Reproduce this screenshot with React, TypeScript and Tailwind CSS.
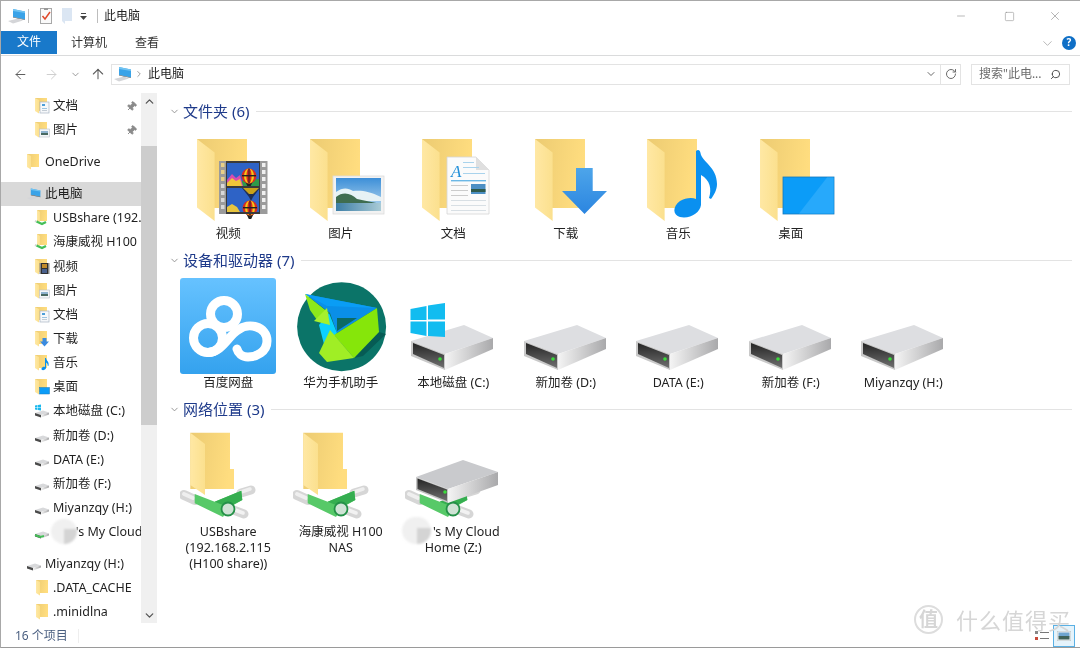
import React from "react";
import { ArrowLeft, ArrowRight, ArrowUp, ChevronDown, ChevronRight, ChevronUp, RotateCw, Search, Minus, Square, X, Pin } from "lucide-react";

const Defs = () => (
  <svg width="0" height="0" className="absolute">
    <defs>
      <linearGradient id="back" x1="0" y1="0" x2="1" y2="0.2"><stop offset="0" stopColor="#eccb72" /><stop offset="1" stopColor="#ffdd7f" /></linearGradient>
      <linearGradient id="flap" x1="0" y1="0" x2="1" y2="0"><stop offset="0" stopColor="#ffe8a4" /><stop offset="1" stopColor="#fbe08e" /></linearGradient>
      <linearGradient id="baidu" x1="0" y1="0" x2="0" y2="1"><stop offset="0" stopColor="#66c2ff" /><stop offset="1" stopColor="#34a2ee" /></linearGradient>
      <linearGradient id="arrow" x1="0" y1="0" x2="0" y2="1"><stop offset="0" stopColor="#4da5ea" /><stop offset="1" stopColor="#2b85e0" /></linearGradient>
      <linearGradient id="side" x1="0" y1="0" x2="1" y2="0"><stop offset="0" stopColor="#f4f4f4" /><stop offset="1" stopColor="#a9a9ab" /></linearGradient>
      <linearGradient id="face" x1="0" y1="0" x2="0" y2="1"><stop offset="0" stopColor="#252525" /><stop offset="1" stopColor="#6f6f6f" /></linearGradient>
      <linearGradient id="sky" x1="0" y1="0" x2="0" y2="1"><stop offset="0" stopColor="#3d8fd8" /><stop offset="1" stopColor="#bcdcf0" /></linearGradient>
      <linearGradient id="water" x1="0" y1="0" x2="1" y2="0"><stop offset="0" stopColor="#3d7ea6" /><stop offset="1" stopColor="#a9cbd6" /></linearGradient>
    </defs>
  </svg>
);

const BigFolder = () => (
  <>
    <polygon points="17,10 67,10 67,79 34,79 17,70" fill="url(#back)" />
    <polygon points="17,10 34.6,23.5 34.6,92 17,78.5" fill="url(#flap)" />
  </>
);

const Balloon = ({ x, y }: { x: number; y: number }) => (
  <g>
    <polygon points={`${x - 4},${y + 5} ${x + 4},${y + 5} ${x + 1.2},${y + 11} ${x - 1.2},${y + 11}`} fill="#222" />
    <circle cx={x} cy={y} r="7.5" fill="#d92a22" />
    <ellipse cx={x} cy={y} rx="5" ry="7.5" fill="#f3c915" />
    <ellipse cx={x} cy={y} rx="2.6" ry="7.5" fill="#d92a22" />
    <rect x={x - 7} y={y - 1} width="14" height="1.4" fill="#222" />
    <rect x={x - 0.5} y={y - 7.5} width="1" height="15" fill="#222" />
  </g>
);

const Video = () => (
  <svg viewBox="0 0 96 96" className="w-24 h-24">
    <BigFolder />
    <rect x="39" y="32" width="48.5" height="53" fill="#9b9b9b" />
    <rect x="46" y="32" width="34" height="53" fill="#3a3a3a" />
    {[34, 41, 48, 55, 62, 69, 76].map((y) => (
      <g key={y}>
        <rect x="41" y={y} width="3.5" height="4" fill={y < 50 ? "#e8cf86" : "#d8d8d8"} />
        <rect x="82" y={y} width="3.5" height="4" fill="#f0f0f0" />
      </g>
    ))}
    <rect x="47" y="34" width="32" height="23" fill="#2e63c6" />
    <polygon points="47,57 47,51 60,52 79,50 79,57" fill="#2e9a4a" />
    <polygon points="47,51 52,45 56,49 60,46 63,57 47,57" fill="#d64db0" />
    <polygon points="47,54 52,49 56,52 60,50 62,57 47,57" fill="#f0c63a" />
    <Balloon x={69} y={47} />
    <rect x="47" y="59" width="32" height="24" fill="#2e63c6" />
    <polygon points="47,83 47,78 52,75 57,78 60,83" fill="#e7c43e" />
    <polygon points="62,59 80,59 73,68 71,72 69,68" fill="#1f2f55" />
    <polygon points="63,59 79,59 73,65 69,65" fill="#c9a21a" />
    <Balloon x={70} y={79} />
    <rect x="46" y="83" width="34" height="2" fill="#3a3a3a" />
    <rect x="46" y="57" width="34" height="2" fill="#3a3a3a" />
  </svg>
);

const Pic = () => (
  <svg viewBox="0 0 96 96" className="w-24 h-24">
    <BigFolder />
    <rect x="40" y="47" width="51" height="38" fill="#f2f2f2" stroke="#dcdcdc" strokeWidth="0.8" />
    <rect x="43" y="49" width="45" height="33" fill="url(#sky)" />
    <path d="M43 63 C50 58 55 59 60 62 C68 61 76 62 88 68 L88 72 L43 72 Z" fill="#e6f2f5" />
    <path d="M43 68 C50 62 58 64 64 70 C72 72 80 73 88 75 L43 75 Z" fill="#3f6d50" />
    <rect x="43" y="74" width="45" height="8" fill="url(#water)" />
  </svg>
);

const Doc = () => (
  <svg viewBox="0 0 96 96" className="w-24 h-24">
    <BigFolder />
    <polygon points="42,28 71,28 84,41 84,85 42,85" fill="#fbfbfb" stroke="#d5d5d5" strokeWidth="0.8" />
    <polygon points="71,28 84,41 71,41" fill="#dfdfdf" />
    <text x="46" y="48" fontSize="17" fontStyle="italic" fontFamily="'Liberation Serif',serif" fill="#1f8ed8">A</text>
    <rect x="58" y="33" width="11" height="1" fill="#a9d3ec" />
    <rect x="58" y="38" width="16" height="1" fill="#a9d3ec" />
    <rect x="58" y="44" width="22" height="1" fill="#a9d3ec" />
    <rect x="46" y="51" width="35" height="1.4" fill="#6cb8e6" />
    {[56, 61, 66].map((y) => <rect key={y} x="46" y={y} width="17" height="1" fill="#ccc" />)}
    {[71, 76, 81].map((y) => <rect key={y} x="46" y={y} width="35" height="1" fill="#d8dfe4" />)}
    <rect x="66" y="55" width="14.5" height="10" fill="#4c8fc4" />
    <rect x="66" y="60" width="14.5" height="3" fill="#2f5a4c" />
  </svg>
);

const Download = () => (
  <svg viewBox="0 0 96 96" className="w-24 h-24">
    <BigFolder />
    <polygon points="58,39 74.7,39 74.7,62 89,62 66.5,85 44,62 58,62" fill="url(#arrow)" />
  </svg>
);

const Music = () => (
  <svg viewBox="0 0 96 96" className="w-24 h-24">
    <BigFolder />
    <path d="M66 22 C68 20 70 21 70.5 24 C72 33 87 38 87 55 C87 61 84 66 81 70 L79 69 C82 60 80 51 71 46 L71 76 C70 84 60 90 50 88 C43 86 42 78 50 72 C55 69 62 68 66 70 Z" fill="#0a90f0" />
  </svg>
);

const Desk = () => (
  <svg viewBox="0 0 96 96" className="w-24 h-24">
    <BigFolder />
    <rect x="40" y="48" width="51" height="37" fill="#0b9cf8" stroke="#1878b8" strokeWidth="0.8" />
    <polygon points="90.6,48.4 90.6,84.6 56,84.6 84,48.4" fill="#27a9fb" />
  </svg>
);

const Baidu = () => (
  <svg viewBox="0 0 96 96" className="w-24 h-24">
    <rect width="96" height="96" rx="3" fill="url(#baidu)" />
    <g fill="none" stroke="#fff" strokeWidth="9" strokeLinecap="round">
      <circle cx="44" cy="36" r="13.5" />
      <circle cx="28" cy="60" r="14.5" />
      <path d="M28 74.5 C42 74.5 48 58 58 52 C68 44 87 48 87 63 C87 74 76 79 68 79 C62 79 58 75 57 71" />
    </g>
  </svg>
);

const Huawei = () => (
  <svg viewBox="0 0 96 96" className="w-24 h-24">
    <circle cx="48.6" cy="48.7" r="44.5" fill="#0b7468" />
    <polygon points="86,54 93,56 70,78 61,80" fill="#065b54" />
    <polygon points="12,16 84,30 44,55 37,35" fill="#0a8fe8" />
    <polygon points="12,16 84,30 34,28" fill="#0a9df5" />
    <polygon points="36,35 44,55 32,70 26,47" fill="#0cd0ff" />
    <polygon points="44,40 64,40 44,53" fill="#0b6a63" />
    <polygon points="84,30 86,54 61,80 41,57" fill="#86e60a" />
    <polygon points="12,16 36,35 24,42 17,32" fill="#8de81b" />
    <polygon points="34,30 37,47 21,43" fill="#a6f02e" />
    <polygon points="37,52 61,80 34,84 26,75" fill="#a0ee25" />
  </svg>
);

const DrivePolys = () => (
  <>
    <polygon points="6,63 59,47 88,60 40,76" fill="#dddee1" />
    <polygon points="6,63 40,76 40,92 6,78" fill="#c9c9c9" />
    <polygon points="8,65 39,77 39,90 8,76" fill="url(#face)" />
    <polygon points="40,76 88,60 88,71 40,92" fill="url(#side)" />
    <circle cx="35" cy="81" r="1.8" fill="#3bdc3b" />
  </>
);

const Drive = () => (
  <svg viewBox="0 0 96 96" className="w-24 h-24"><DrivePolys /></svg>
);

const WinDrive = () => (
  <svg viewBox="0 0 96 96" className="w-24 h-24">
    <DrivePolys />
    <polygon points="5.5,31 21.5,28 21.5,42 5.5,42" fill="#12bcf0" />
    <polygon points="23,27.5 40,25 40,41.5 23,41.5" fill="#12bcf0" />
    <polygon points="5.5,43.5 21.5,43.5 21.5,58 5.5,55" fill="#12bcf0" />
    <polygon points="23,43.5 40,43.5 40,59 23,58" fill="#12bcf0" />
  </svg>
);

const Pipes = () => (
  <g strokeLinecap="round" fill="none">
    <path d="M4 68 L15 73" stroke="#d6d6d6" strokeWidth="10" />
    <path d="M4 67 L13 71" stroke="#efefef" strokeWidth="4" />
    <path d="M61 66 L71 63" stroke="#d6d6d6" strokeWidth="9" />
    <path d="M61 65 L70 62" stroke="#efefef" strokeWidth="3.5" />
    <path d="M48 81 L64 87" stroke="#d6d6d6" strokeWidth="9" />
    <path d="M50 81 L63 86" stroke="#f2f2f2" strokeWidth="3.5" />
    <polygon points="14.7,67 34.7,74.7 61.3,63.7 62.3,73 49.7,80.3 43,90 14.7,76.3" fill="#57c968" stroke="none" />
    <polygon points="34.7,74.7 61.3,63.7 62.3,73 48,80" fill="#35ae50" stroke="none" />
    <circle cx="48" cy="82" r="6.5" fill="#cfe3d5" stroke="#249148" strokeWidth="1.8" />
  </g>
);

const NetFolder = () => (
  <svg viewBox="0 0 96 96" className="w-24 h-24">
    <polygon points="10.3,5.7 50,5.7 50,42 54,42 54,62 10.3,62" fill="url(#back)" />
    <polygon points="10.3,5.7 25,17 25,68 10.3,58" fill="url(#flap)" />
    <Pipes />
  </svg>
);

const NetDrive = () => (
  <svg viewBox="0 0 96 96" className="w-24 h-24">
    <Pipes />
    <polygon points="11,50 58,33 93,45 43,62" fill="#c9cacd" />
    <polygon points="11,50 43,62 43,76 11,63" fill="#c4c4c4" />
    <polygon points="12.5,51.5 42,62.5 42,74 12.5,62" fill="url(#face)" />
    <polygon points="43,62 93,45 93,58 43,76" fill="url(#side)" />
    <circle cx="40" cy="65" r="1.8" fill="#3bdc3b" />
  </svg>
);

const Computer = ({ className = "w-5 h-4" }: { className?: string }) => (
  <svg viewBox="0 0 20 16" className={className}>
    <polygon points="1,13 11,10.5 16,12.5 6,15.5" fill="#d4d5d8" />
    <polygon points="6,1 18,3.5 18,11.5 6,9" fill="#3aa3e8" />
    <polygon points="6,1 18,3.5 18,5 6,3" fill="#72c4f2" />
    <polygon points="6,9 18,11.5 18,12 6,9.6" fill="#555" />
  </svg>
);

const SmFolder = ({ x = 3 }: { x?: number }) => (
  <>
    <polygon points={`${x},0 ${x + 12},0 ${x + 12},13 ${x},13`} fill="url(#back)" />
    <polygon points={`${x},0 ${x + 4},2 ${x + 4},15.5 ${x},13`} fill="url(#flap)" />
  </>
);

const Small = ({ kind }: { kind: string }) => {
  const box = "w-4 h-4 shrink-0";
  if (kind === "doc") return <svg viewBox="0 0 16 16" className={box}><SmFolder x={1} /><rect x="6" y="4" width="9" height="11" fill="#f6f8fa" stroke="#a9b6c4" strokeWidth="0.7" /><rect x="8" y="6" width="3" height="2" fill="#4c9ed9" /><rect x="8" y="10" width="5" height="1" fill="#9bc4e2" /><rect x="8" y="12" width="5" height="1" fill="#c4ccd4" /></svg>;
  if (kind === "pic") return <svg viewBox="0 0 16 16" className={box}><SmFolder x={1} /><rect x="5.5" y="7" width="10" height="8" fill="#f4f6f8" stroke="#b9bfc6" strokeWidth="0.6" /><rect x="7" y="9" width="7" height="4" fill="#8fb3cf" /><rect x="7" y="11" width="7" height="2" fill="#496a62" /></svg>;
  if (kind === "video") return <svg viewBox="0 0 16 16" className={box}><SmFolder x={1} /><rect x="5.5" y="4" width="10" height="11" fill="#8a8a8a" /><rect x="7" y="4" width="7" height="11" fill="#2f2f2f" /><rect x="8" y="5" width="5" height="4" fill="#c08a2a" /><rect x="8" y="10" width="5" height="4" fill="#49608c" /></svg>;
  if (kind === "down") return <svg viewBox="0 0 16 16" className={box}><SmFolder x={1} /><polygon points="8.5,7 12.5,7 12.5,10.5 15,10.5 10.5,15.5 6,10.5 8.5,10.5" fill="#3a8be0" /></svg>;
  if (kind === "music") return <svg viewBox="0 0 16 16" className={box}><SmFolder x={1} /><path d="M11 3 L12 3 C12.5 6 15.5 6.5 14.5 11 L13.5 10.5 C14 9 13 8 12 7.5 L12 13 C11.5 15.5 7 16 7.5 13.5 C8 12 10 11.5 11 12 Z" fill="#0a90f0" /></svg>;
  if (kind === "desk") return <svg viewBox="0 0 16 16" className={box}><SmFolder x={1} /><rect x="5.5" y="8.5" width="10" height="6.5" fill="#0b9cf8" stroke="#1878b8" strokeWidth="0.5" /></svg>;
  if (kind === "plain") return <svg viewBox="0 0 16 16" className={box}><SmFolder x={2} /></svg>;
  if (kind === "od") return <svg viewBox="0 0 16 16" className={box}><SmFolder x={1} /></svg>;
  if (kind === "usb") return (
    <svg viewBox="0 0 16 16" className={box}>
      <polygon points="3,0 13,0 13,11 3,11" fill="url(#back)" />
      <polygon points="3,0 6,2 6,12 3,10" fill="url(#flap)" />
      <path d="M1 11 L2 11.5" stroke="#d0d0d0" strokeWidth="2" />
      <path d="M2.5 11.5 L8 14 L12 12" stroke="#45bf58" strokeWidth="2.4" fill="none" />
    </svg>
  );
  if (kind === "pc") return <Computer className="w-4 h-4 shrink-0" />;
  return (
    <svg viewBox="0 0 16 16" className={box}>
      {kind === "win" && (
        <g fill="#19b8ee">
          <polygon points="1,2.5 3.5,2 3.5,4 1,4" /><polygon points="4,2 7,1.5 7,4 4,4" />
          <polygon points="1,4.5 3.5,4.5 3.5,7 1,6.5" /><polygon points="4,4.5 7,4.5 7,7.5 4,7" />
        </g>
      )}
      <polygon points="1,10 9,7.5 15,9.5 7,12" fill="#d8d9db" />
      <polygon points="1,10 7,12 7,14.5 1,12.5" fill="#4a4a4a" />
      <polygon points="7,12 15,9.5 15,11.5 7,14.5" fill="url(#side)" />
      {kind === "net" && <path d="M1 11 L6 13 L10 12" stroke="#45bf58" strokeWidth="2" fill="none" />}
    </svg>
  );
};

const Row = ({ kind, label, level = 2, pin, active, mt, nudge }: { kind: string; label: string; level?: 1 | 2; pin?: boolean; active?: boolean; mt?: boolean; nudge?: boolean }) => (
  <div className={`h-6 flex items-center whitespace-nowrap overflow-hidden ${active ? "bg-[#d9d9d9]" : ""} ${mt ? "mt-2" : ""} ${nudge ? "mt-px" : ""} ${level === 1 ? "pl-[25px]" : "pl-[33px]"}`}>
    <Small kind={kind} />
    <span className={`ml-[3px] ${pin ? "flex-1" : ""}`}>{label}</span>
    {pin && <Pin size={11} className="mr-[4px] rotate-45 text-[#8a8a8a] shrink-0" fill="#8a8a8a" />}
  </div>
);

const Section = ({ title, count, children }: { title: string; count: number; children: React.ReactNode }) => (
  <section className="pt-2">
    <div className="h-5 flex items-center pl-3 pr-2 mb-2">
      <ChevronDown size={11} className="text-[#8e8e8e] shrink-0" />
      <span className="ml-[3px] text-[15px] text-[#1e3a8a] whitespace-nowrap">{title} ({count})</span>
      <div className="flex-1 h-px bg-[#e3e3e3] ml-[6px]" />
    </div>
    <div className="flex pl-[15px]">{children}</div>
  </section>
);

const Tile = ({ icon, children }: { icon: React.ReactNode; children: React.ReactNode }) => (
  <div className="w-[112.5px] flex flex-col items-center shrink-0">
    {icon}
    <div className="mt-px leading-4 text-center whitespace-nowrap text-[#222]">{children}</div>
  </div>
);

const Smudge = ({ className }: { className: string }) => (
  <div className={`absolute overflow-hidden rounded-full bg-[#f0f0f0] blur-[1px] flex items-end justify-end ${className}`}>
    <div className="w-1/2 h-3/5 bg-[#d4d4d4]" />
  </div>
);

const gap = "\u00A0\u00A0\u00A0\u00A0\u00A0\u00A0\u00A0";

export default function App() {
  return (
    <div className="relative w-[1080px] h-[648px] overflow-hidden bg-white border-l border-t border-[#a8a8a8] flex flex-col text-[12.5px] text-[#1f1f1f] blur-[0.35px] font-['Noto_Sans','Noto_Sans_CJK_SC',sans-serif]">
      <Defs />
      {/* title bar */}
      <div className="h-[30px] flex items-center shrink-0 pl-[6px]">
        <Computer />
        <div className="w-px h-[14px] bg-[#bdbdbd] ml-[1px]" />
        <svg viewBox="0 0 12 16" className="w-3 h-4 ml-[11px]">
          <rect x="0.5" y="0.5" width="11" height="15" fill="#fafafa" stroke="#a8a8a8" />
          <rect x="4" y="0" width="4" height="2" fill="#999" />
          <path d="M2.5 8 L5 11 L10 4" stroke="#e0492b" strokeWidth="1.5" fill="none" />
        </svg>
        <svg viewBox="0 0 10 16" className="w-[10px] h-4 ml-[10px]">
          <polygon points="0,0 10,0 10,13 3,13 3,16 0,13" fill="#dbe6f3" />
        </svg>
        <svg viewBox="0 0 7 7" className="w-[7px] h-[7px] ml-[8px]">
          <rect x="1" y="0" width="5" height="1" fill="#444" />
          <polygon points="0,3 7,3 3.5,7" fill="#444" />
        </svg>
        <div className="w-px h-[14px] bg-[#bdbdbd] ml-[10px]" />
        <span className="ml-[6px] text-xs">此电脑</span>
        <div className="ml-auto flex items-center text-[#8c8c8c] pr-[18px]">
          <Minus size={12} strokeWidth={1.2} />
          <Square size={11} strokeWidth={1.2} className="ml-[37px]" />
          <X size={14} strokeWidth={1.1} className="ml-[33px]" />
        </div>
      </div>
      {/* ribbon */}
      <div className="h-[25px] flex items-center shrink-0 border-b border-[#dadbdc] text-xs text-[#333]">
        <div className="w-[56px] h-[23px] mb-[2px] bg-[#1979ca] text-white flex items-center justify-center">文件</div>
        <span className="ml-[14px]">计算机</span>
        <span className="ml-[28px]">查看</span>
        <ChevronDown size={15} strokeWidth={1.2} className="ml-auto text-[#a0a0a0]" />
        <div className="w-[14px] h-[14px] rounded-full bg-[#0f6fc6] text-white text-[10px] font-bold flex items-center justify-center ml-[7px] mr-[4px]">?</div>
      </div>
      {/* nav bar */}
      <div className="h-[37px] flex items-center shrink-0 pb-[1px]">
        <ArrowLeft size={15} strokeWidth={1.6} className="ml-[12px] text-[#5f5f5f]" />
        <ArrowRight size={15} strokeWidth={1.6} className="ml-[16px] text-[#cfcfcf]" />
        <ChevronDown size={11} strokeWidth={1.6} className="ml-[11px] text-[#777]" />
        <ArrowUp size={16} strokeWidth={1.6} className="ml-[9px] text-[#5f5f5f]" />
        <div className="ml-[5px] w-[850px] h-[21px] border border-[#e3e3e3] flex items-center pl-[1px]">
          <Computer />
          <ChevronRight size={10} strokeWidth={1.5} className="ml-[1px] text-[#666]" />
          <span className="ml-[4px] text-xs">此电脑</span>
          <ChevronDown size={12} strokeWidth={1.6} className="ml-auto mr-[3px] text-[#444]" />
          <div className="h-full w-[20px] border-l border-[#e3e3e3] flex items-center justify-center">
            <RotateCw size={12} className="text-[#6b6b6b]" />
          </div>
        </div>
        <div className="ml-[10px] w-[99px] h-[21px] border border-[#e3e3e3] flex items-center pl-[7px] text-xs text-[#6d6d6d]">
          <span className="whitespace-nowrap">搜索"此电...</span>
          <Search size={11} strokeWidth={2} className="ml-auto mr-[8px] text-[#444] -scale-x-100" />
        </div>
      </div>
      {/* body */}
      <div className="flex-1 flex min-h-0">
        <aside className="w-[140px] shrink-0 overflow-hidden pt-px">
          <Row kind="doc" label="文档" pin />
          <Row kind="pic" label="图片" pin />
          <Row kind="od" label="OneDrive" level={1} mt />
          <Row kind="pc" label="此电脑" level={1} active mt />
          <Row kind="usb" label="USBshare (192.168.2.115 (H100 share))" />
          <Row kind="usb" label="海康威视 H100 NAS" />
          <Row kind="video" label="视频" nudge />
          <Row kind="pic" label="图片" />
          <Row kind="doc" label="文档" />
          <Row kind="down" label="下载" />
          <Row kind="music" label="音乐" />
          <Row kind="desk" label="桌面" />
          <Row kind="win" label="本地磁盘 (C:)" />
          <Row kind="drive" label="新加卷 (D:)" nudge />
          <Row kind="drive" label="DATA (E:)" />
          <Row kind="drive" label="新加卷 (F:)" />
          <Row kind="drive" label="Miyanzqy (H:)" />
          <Row kind="net" label={`${gap}'s My Cloud Home (Z:)`} />
          <Row kind="drive" label="Miyanzqy (H:)" level={1} mt />
          <Row kind="plain" label=".DATA_CACHE" />
          <Row kind="plain" label=".minidlna" />
        </aside>
        <div className="w-[16px] shrink-0 bg-[#f0f0f0] flex flex-col items-center">
          <ChevronUp size={13} strokeWidth={2.4} className="mt-[2px] text-[#555]" />
          <div className="w-full h-[279px] mt-[38px] bg-[#cdcdcd]" />
          <ChevronDown size={13} strokeWidth={2.4} className="mt-auto mb-[1px] text-[#555]" />
        </div>
        <main className="flex-1 min-w-0">
          <Section title="文件夹" count={6}>
            <Tile icon={<Video />}>视频</Tile>
            <Tile icon={<Pic />}>图片</Tile>
            <Tile icon={<Doc />}>文档</Tile>
            <Tile icon={<Download />}>下载</Tile>
            <Tile icon={<Music />}>音乐</Tile>
            <Tile icon={<Desk />}>桌面</Tile>
          </Section>
          <Section title="设备和驱动器" count={7}>
            <Tile icon={<Baidu />}>百度网盘</Tile>
            <Tile icon={<Huawei />}>华为手机助手</Tile>
            <Tile icon={<WinDrive />}>本地磁盘 (C:)</Tile>
            <Tile icon={<Drive />}>新加卷 (D:)</Tile>
            <Tile icon={<Drive />}>DATA (E:)</Tile>
            <Tile icon={<Drive />}>新加卷 (F:)</Tile>
            <Tile icon={<Drive />}>Miyanzqy (H:)</Tile>
          </Section>
          <Section title="网络位置" count={3}>
            <Tile icon={<NetFolder />}>USBshare<br />(192.168.2.115<br />(H100 share))</Tile>
            <Tile icon={<NetFolder />}>海康威视 H100<br />NAS</Tile>
            <Tile icon={<NetDrive />}>{gap}&nbsp;'s My Cloud<br />Home (Z:)</Tile>
          </Section>
        </main>
      </div>
      {/* status bar */}
      <div className="h-[25px] shrink-0 flex items-center pl-[14px] pt-px text-xs text-[#4a5f80] border-b border-[#9a9a9a]">
        <span>16 个项目</span>
        <div className="w-px h-[14px] bg-[#eeeeee] ml-[10px]" />
        <div className="ml-auto mr-[5px] flex items-center">
          <svg viewBox="0 0 15 13" className="w-[15px] h-[13px]">
            <rect x="0" y="2" width="3" height="3" fill="#888" /><rect x="0" y="8" width="3" height="3" fill="#c94a3a" />
            <rect x="5" y="3" width="9" height="1" fill="#777" /><rect x="5" y="9" width="9" height="1" fill="#777" />
          </svg>
          <div className="ml-[3px] w-[22px] h-[22px] bg-[#e5f3fb] border border-[#5ab0e4] flex items-center justify-center">
            <svg viewBox="0 0 14 10" className="w-[14px] h-[10px]"><rect width="14" height="10" fill="#eef1f4" stroke="#9aa" strokeWidth="0.6" /><rect x="1.5" y="1.5" width="11" height="4" fill="#6ea5cf" /><rect x="1.5" y="5" width="11" height="3.5" fill="#3f6258" /></svg>
          </div>
        </div>
      </div>
      {/* privacy smudges laid over the labels */}
      <Smudge className="left-[50px] top-[518px] w-[26px] h-[25px]" />
      <Smudge className="left-[401px] top-[516px] w-[29px] h-[27px]" />
      {/* watermark */}
      <div className="absolute left-[913px] top-[604px] flex items-center text-[#d6d6d6] pointer-events-none">
        <div className="w-[29px] h-[29px] rounded-full border-2 border-[#dddddd] flex items-center justify-center text-[19px] font-bold leading-none">值</div>
        <span className="ml-[13px] text-[22px] leading-none tracking-[1px] whitespace-nowrap">什么值得买</span>
      </div>
    </div>
  );
}
